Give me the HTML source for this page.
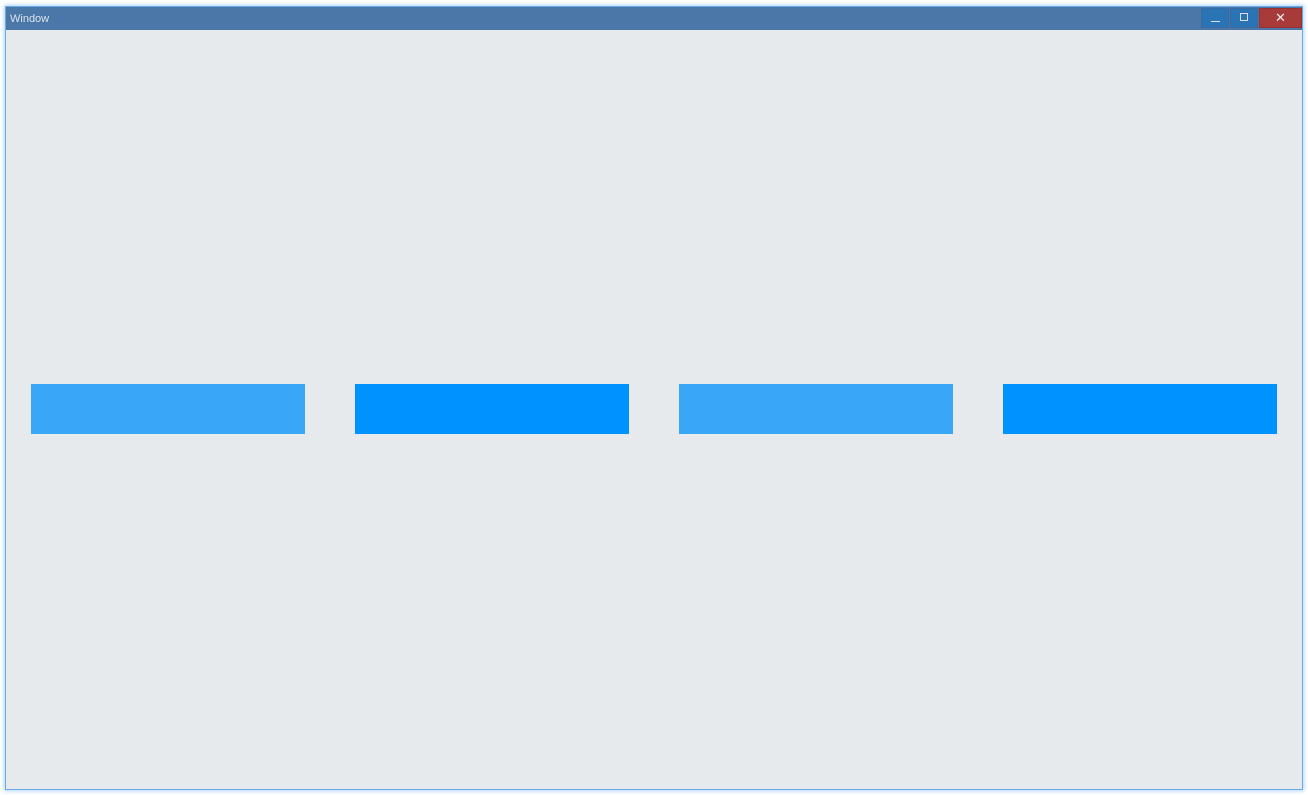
<!DOCTYPE html>
<html><head><style>
html,body{margin:0;width:1308px;height:795px;background:#fff;overflow:hidden;font-family:"Liberation Sans",sans-serif}
.win{position:absolute;left:5px;top:6px;width:1296px;height:782px;background:#e6eaed;border:1px solid #6aa8e8;box-shadow:0 0 4px 1px rgba(80,160,240,.45)}
.tb{position:absolute;left:0;top:0;width:100%;height:23px;background:#4a76a8}
.tt{position:absolute;left:4px;top:6px;font-size:11px;color:#dde4ee}
.b{position:absolute;top:1px;height:20px;border:1px solid #3a6a9e;box-sizing:border-box}
.r{position:absolute;top:377px;width:274px;height:50px}
</style></head><body>
<div class="win">
<div class="tb"><span class="tt">Window</span>
<div class="b" style="left:1195px;width:28px;background:#2a74b6"><div style="position:absolute;left:9px;top:12px;width:9px;height:1px;background:#dde"></div></div>
<div class="b" style="left:1224px;width:28px;background:#2a74b6"><div style="position:absolute;left:9px;top:4px;width:6px;height:6px;border:1px solid #dde"></div></div>
<div class="b" style="left:1253px;width:43px;background:#a83a3a;border-color:#983030;color:#eee;font-size:13px;text-align:center;line-height:18px">✕</div>
</div>
<div class="r" style="left:25px;background:#3aa6f8"></div>
<div class="r" style="left:349px;background:#0092ff"></div>
<div class="r" style="left:673px;background:#3aa6f8"></div>
<div class="r" style="left:997px;background:#0092ff"></div>
</div>
</body></html>
